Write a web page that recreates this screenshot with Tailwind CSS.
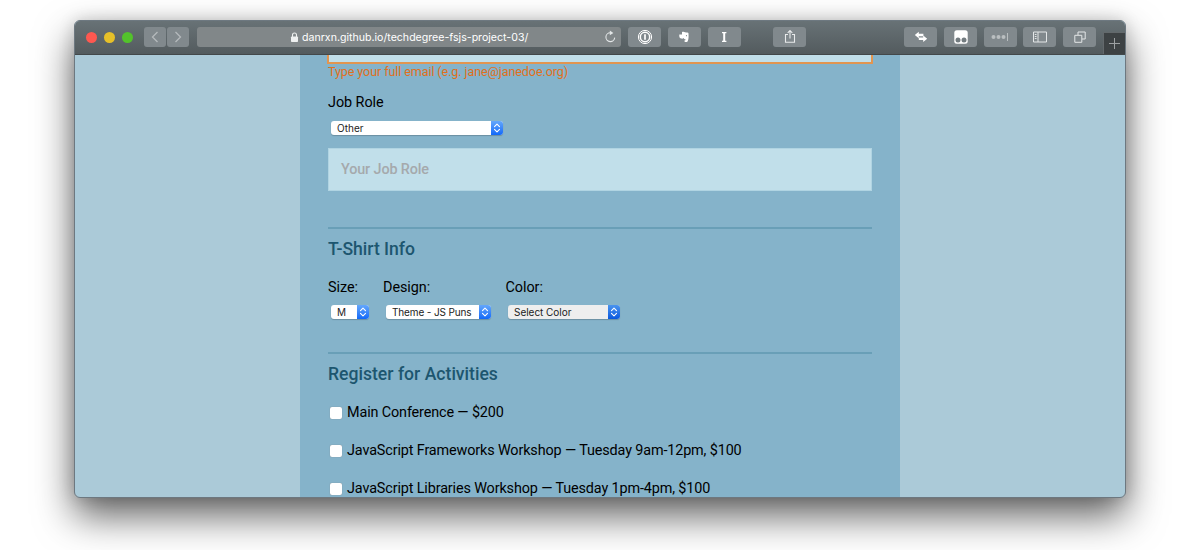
<!DOCTYPE html>
<html lang="en">
<head>
<meta charset="utf-8">
<title>Registration form</title>
<script src="https://cdn.jsdelivr.net/npm/@tailwindcss/browser@4"></script>
</head>
<body class="bg-white overflow-hidden h-[550px] pt-5 pl-[74px]">
<svg class="hidden">
  <symbol id="arrows" viewBox="0 0 12 14"><path d="M3.500 5.700 6 3.200l2.500 2.500M3.500 8.300 6 10.800l2.500-2.500" fill="none" stroke="#fff" stroke-width="1.100" stroke-linecap="round" stroke-linejoin="round"/></symbol>
</svg>
<div class="w-[1052px] h-[478px] rounded-[6px] overflow-hidden border border-[#6d7880] flex flex-col bg-[#abcad8] shadow-[0_18px_38px_rgba(0,0,0,0.62),0_0_16px_rgba(0,0,0,0.15)]">
  <header class="h-[34px] shrink-0 flex items-start bg-linear-to-b from-[#687276] to-[#535b5e] border-b border-[#43484a] pl-[11px] pt-[6px] relative">
    <div class="flex gap-[7px] pt-[5px]">
      <span class="size-[11px] rounded-full bg-[#fe5850]"></span>
      <span class="size-[11px] rounded-full bg-[#e6c029]"></span>
      <span class="size-[11px] rounded-full bg-[#53c22b]"></span>
    </div>
    <div class="flex gap-px ml-[10.5px]">
      <button class="w-[22px] h-5 rounded-[3px] bg-[#81898d] flex items-center justify-center"><svg width="10" height="14" fill="none" stroke="#b5babc" stroke-width="1.3"><path d="M7.5 2 2.5 7l5 5"/></svg></button>
      <button class="w-[22px] h-5 rounded-[3px] bg-[#81898d] flex items-center justify-center"><svg width="10" height="14" fill="none" stroke="#b5babc" stroke-width="1.3"><path d="m2.5 2 5 5-5 5"/></svg></button>
    </div>
    <div class="ml-[8.5px] w-[424px] h-5 rounded-[3px] bg-[#818789] flex items-center pl-[93px] pr-[4px]">
      <svg width="9" height="11" viewBox="0 0 9 11"><rect x="1" y="4.5" width="7" height="5.5" rx=".8" fill="#eef0f0"/><path d="M2.5 5V3a2 2 0 0 1 4 0v2" fill="none" stroke="#eef0f0" stroke-width="1.1"/></svg>
      <span class="ml-[3px] text-[10.6px] leading-5 font-[Inter,sans-serif] text-white whitespace-nowrap pt-[2px]">danrxn.github.io/techdegree-fsjs-project-03/</span>
      <svg class="ml-auto" width="13" height="14" viewBox="0 0 13 14"><path d="M6.3 2.8A4.4 4.4 0 1 0 10.7 7.6" fill="none" stroke="#e3e6e7" stroke-width="1.1"/><path d="m5.8.5 3.6 2.4-3.6 2.3z" fill="#e3e6e7"/></svg>
    </div>
    <div class="flex gap-[6.8px] ml-[7px]">
      <button class="w-[33px] h-5 rounded-[3px] bg-[#81898d] flex items-center justify-center"><svg width="16" height="16" fill="none"><circle cx="8" cy="8" r="6.6" stroke="#fff"/><circle cx="8" cy="8" r="4.7" stroke="#fff" stroke-width="1.5"/><path d="M8 5.3v5.4" stroke="#fff" stroke-width="1.7"/></svg></button>
      <button class="w-[33px] h-5 rounded-[3px] bg-[#81898d] flex items-center justify-center"><svg width="12" height="14" viewBox="0 0 12 14"><path d="M4 2v2.500H1.300C1.100 6.500 1.500 8.200 3 8.600c1.200.300 2 .200 2.800-.500.200 1.300 1 1.300 1.700 1.500.400.500 0 .900-.6.700-.6 0-.6 1.500.300 1.800h1.600c1.700-.5 2.100-4.900 1.600-9C10.200 2.400 8.900 2.600 7 2.300 6.400 1.500 5 1.500 4 2z" fill="#fff"/><circle cx="8.500" cy="5.700" r=".6" fill="#81898d"/></svg></button>
      <button class="w-[33px] h-5 rounded-[3px] bg-[#81898d] flex items-center justify-center"><svg width="10" height="14"><path d="M3 2.700h4.400M3 11.300h4.400" stroke="#fff" stroke-width="1.200"/><path d="M5.200 2.500v9" stroke="#fff" stroke-width="2"/></svg></button>
    </div>
    <button class="ml-[32.800px] w-[33px] h-5 rounded-[3px] bg-[#81898d] flex items-center justify-center"><svg width="12" height="16" fill="none" stroke="#e8eaeb" stroke-width="1.100"><path d="M4 5.500H1.500v7.800h9V5.500H8M6 9.500V1.500M3.700 3.800 6 1.500l2.300 2.300"/></svg></button>
    <div class="flex gap-[6.7px] ml-[98px]">
      <button class="w-[33px] h-5 rounded-[3px] bg-[#81898d] flex items-center justify-center"><svg width="14" height="12" fill="#fff"><path d="M.8 4 4.800.800v2h4.600v2.400H4.800v2zM13.200 7.800l-4 3.200V9H4.800V6.600h4.400v-2z"/></svg></button>
      <button class="w-[33px] h-5 rounded-[3px] bg-[#81898d] flex items-center justify-center"><svg width="14" height="14"><rect x=".3" y=".3" width="13.400" height="13.400" rx="2.500" fill="#fff"/><circle cx="4" cy="10" r="2.500" fill="#737c80"/><circle cx="10" cy="10" r="2.500" fill="#737c80"/></svg></button>
      <button class="w-[33px] h-5 rounded-[3px] bg-[#81898d] flex items-center justify-center"><svg width="18" height="10" fill="#b9bec0"><circle cx="2.500" cy="5" r="2"/><circle cx="7.500" cy="5" r="2"/><circle cx="12.500" cy="5" r="2"/><path d="M16 1h1v8h-1z"/></svg></button>
      <button class="w-[33px] h-5 rounded-[3px] bg-[#81898d] flex items-center justify-center"><svg width="14" height="12" fill="none" stroke="#e3e6e7"><path d="M.5 1h13v10H.5zM5 1v10M1.800 3.500h1.700M1.800 5.500h1.700M1.800 7.500h1.700"/></svg></button>
      <button class="w-[33px] h-5 rounded-[3px] bg-[#81898d] flex items-center justify-center"><svg width="12" height="12" fill="none" stroke="#e3e6e7"><path d="M.8 4.300h7v7h-7zM4 4V1h7.200v7H8"/></svg></button>
    </div>
    <button class="absolute right-0 bottom-0 w-[22px] h-[22px] bg-[#3d4244] border-t border-l border-[#63696c] flex items-center justify-center"><svg width="11" height="11" stroke="#9da1a3"><path d="M0 5.500h11M5.500 0v11"/></svg></button>
  </header>
  <main class="w-[600px] ml-[225px] h-[442px] bg-[#85b3ca] px-7 overflow-hidden font-[Roboto,sans-serif] text-[14.4px] tracking-[-0.13px] text-black">
    <div class="h-[9px] w-[546px] -ml-px border-2 border-t-0 border-[#e29550] bg-[#c1dfea]"></div>
    <p class="h-[17px] leading-[15px] text-[12.6px] tracking-[-0.11px] text-[#e0701c] whitespace-nowrap">Type your full email (e.g. jane@janedoe.org)</p>
    <p class="mt-[13px] h-[18px] leading-[18px] tracking-[-0.05px]">Job Role</p>
    <div class="mt-[9px] ml-[2.5px] w-[172.500px] h-[14px] rounded-[3px] bg-white overflow-hidden flex justify-between shadow-[0_1px_1px_rgba(0,0,0,0.2)]">
      <span class="pl-[6.5px] font-[Inter,sans-serif] text-[10px] leading-[14px] tracking-[0.05px] text-[#222]">Other</span>
      <span class="w-3 bg-linear-to-b from-[#64a7fb] to-[#0f68f8]"><svg width="12" height="14"><use href="#arrows"/></svg></span>
    </div>
    <div class="mt-[13px] h-[43px] bg-[#c1dfea] border border-[#b0d4e2] pl-3 leading-[41px] font-medium text-[#a5a9ac]">Your Job Role</div>
    <section class="mt-[36px] border-t-2 border-[#699fb7]">
      <h2 class="mt-[8px] h-6 leading-6 text-[17.6px] tracking-[-0.04px] font-medium text-[#1d566f]">T-Shirt Info</h2>
      <div class="flex mt-[18px] tracking-[-0.05px]">
        <div class="w-[55px]"><p class="leading-[18px]">Size:</p>
          <div class="mt-[8px] ml-[2.5px] w-[38.500px] h-[14px] rounded-[3px] bg-white overflow-hidden flex justify-between shadow-[0_1px_1px_rgba(0,0,0,0.2)]"><span class="pl-[6.5px] font-[Inter,sans-serif] text-[10px] leading-[14px] text-[#222]">M</span><span class="w-3 bg-linear-to-b from-[#64a7fb] to-[#0f68f8]"><svg width="12" height="14"><use href="#arrows"/></svg></span></div>
        </div>
        <div class="w-[122.500px]"><p class="leading-[18px]">Design:</p>
          <div class="mt-[8px] ml-[2.5px] w-[105.500px] h-[14px] rounded-[3px] bg-white overflow-hidden flex justify-between shadow-[0_1px_1px_rgba(0,0,0,0.2)]"><span class="pl-[6.5px] font-[Inter,sans-serif] text-[10px] leading-[14px] tracking-[-0.13px] whitespace-nowrap text-[#222]">Theme - JS Puns</span><span class="w-3 bg-linear-to-b from-[#64a7fb] to-[#0f68f8]"><svg width="12" height="14"><use href="#arrows"/></svg></span></div>
        </div>
        <div><p class="leading-[18px]">Color:</p>
          <div class="mt-[8px] ml-[2.5px] w-[112px] h-[14px] rounded-[3px] bg-[#eee] overflow-hidden flex justify-between shadow-[0_1px_1px_rgba(0,0,0,0.2)]"><span class="pl-[6px] font-[Inter,sans-serif] text-[10px] leading-[14px] tracking-[-0.03px] whitespace-nowrap text-[#222]">Select Color</span><span class="w-3 bg-linear-to-b from-[#4a94ee] to-[#0757de]"><svg width="12" height="14"><use href="#arrows"/></svg></span></div>
        </div>
      </div>
    </section>
    <section class="mt-[33px] border-t-2 border-[#699fb7]">
      <h2 class="mt-[8px] h-6 leading-6 text-[17.6px] tracking-[0px] font-medium text-[#1d566f]">Register for Activities</h2>
      <div class="mt-[18px] flex flex-col gap-5 whitespace-nowrap leading-[18px]">
        <label class="flex"><span class="mt-[3px] ml-[2px] mr-[5px] size-3 rounded-[2px] bg-white shadow-[0_0_1px_#777]"></span>Main Conference — $200</label>
        <label class="flex"><span class="mt-[3px] ml-[2px] mr-[5px] size-3 rounded-[2px] bg-white shadow-[0_0_1px_#777]"></span>JavaScript Frameworks Workshop — Tuesday 9am-12pm, $100</label>
        <label class="flex"><span class="mt-[3px] ml-[2px] mr-[5px] size-3 rounded-[2px] bg-white shadow-[0_0_1px_#777]"></span>JavaScript Libraries Workshop — Tuesday 1pm-4pm, $100</label>
      </div>
    </section>
  </main>
</div>
</body>
</html>
